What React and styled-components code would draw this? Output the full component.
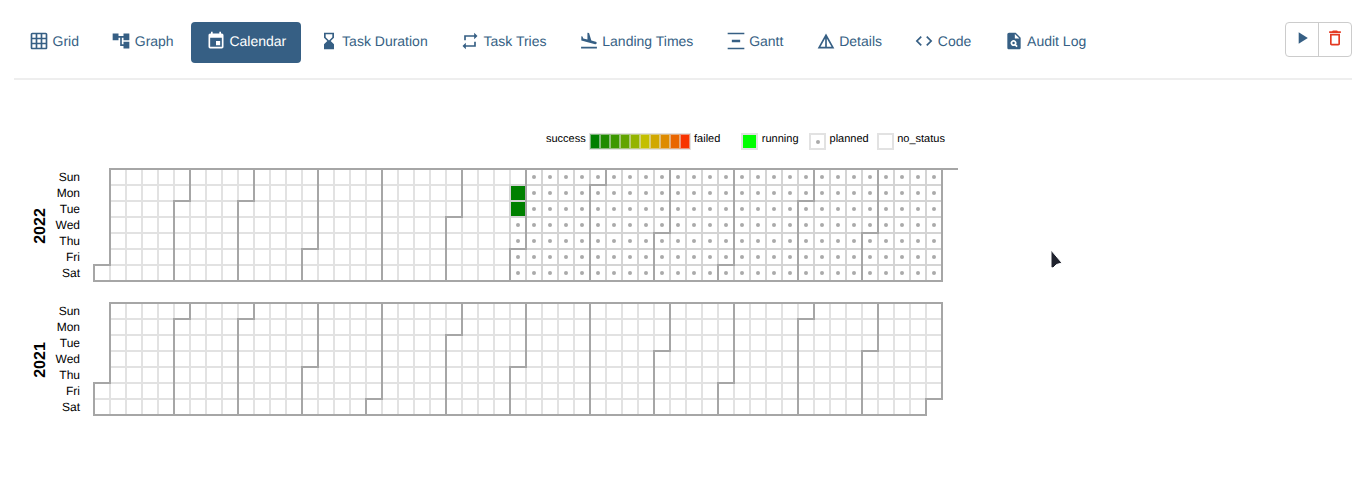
import React from 'react'
import styled, {createGlobalStyle} from 'styled-components'
import {
  MdGridOn, MdAccountTree, MdEvent, MdHourglassBottom, MdRepeat, MdFlightLand,
  MdVerticalDistribute, MdDetails, MdCode, MdPlagiarism, MdPlayArrow, MdDeleteOutline,
} from 'react-icons/md'

const CELL = 16
const LEFT = 94
const DAYS = ['Sun', 'Mon', 'Tue', 'Wed', 'Thu', 'Fri', 'Sat']
const RAMP = ['#008000', '#1f8b00', '#3c9800', '#62a400', '#94b400', '#c4bf00', '#d1a800', '#de8b00', '#e96600', '#f83300']

const tabs = [
  {label: 'Grid', icon: MdGridOn},
  {label: 'Graph', icon: MdAccountTree},
  {label: 'Calendar', icon: MdEvent, active: true},
  {label: 'Task Duration', icon: MdHourglassBottom},
  {label: 'Task Tries', icon: MdRepeat},
  {label: 'Landing Times', icon: MdFlightLand},
  {label: 'Gantt', icon: MdVerticalDistribute},
  {label: 'Details', icon: MdDetails},
  {label: 'Code', icon: MdCode},
  {label: 'Audit Log', icon: MdPlagiarism},
]

const GlobalStyle = createGlobalStyle`
  html, body {
    margin: 0;
    background: #fff;
    font-family: "Liberation Sans", Arial, sans-serif;
    text-rendering: geometricPrecision;
  }
`

const Page = styled.div`
  position: relative;
  width: 1359px;
  height: 478px;
  overflow: hidden;
`

const Toolbar = styled.div`
  display: flex;
  justify-content: space-between;
  align-items: flex-start;
  margin: 0 7px 0 14px;
  padding: 22px 0 15px;
  border-bottom: 2px solid #eee;
`

const Tabs = styled.nav`
  display: flex;
  gap: 2.3px;
`

const Tab = styled.a`
  display: flex;
  align-items: center;
  gap: 3.5px;
  height: 41px;
  padding: 0 15px 3px;
  box-sizing: border-box;
  border-radius: 4px;
  font-size: 14px;
  color: ${p => (p.$active ? '#fff' : '#365f84')};
  background: ${p => (p.$active ? '#365f84' : 'transparent')};
`

const ButtonGroup = styled.div`
  display: flex;
  box-sizing: border-box;
  height: 35px;
  border: 1px solid #ccc;
  border-radius: 4px;
`

const GroupButton = styled.button`
  display: flex;
  align-items: center;
  justify-content: center;
  width: ${p => (p.$last ? '33px' : '32px')};
  padding: 0 0 3px;
  border: 0;
  border-left: ${p => (p.$last ? '1px solid #ccc' : '0')};
  background: transparent;
  color: ${p => (p.$danger ? '#e43921' : '#365f84')};
`

const Legend = styled.div`
  display: flex;
  align-items: flex-start;
  margin: 52px 0 18px 546px;
  height: 18px;
  font-size: 11px;
  line-height: 13px;
  color: #000;
`

const LegendLabel = styled.span`
  margin: 1px ${p => p.$after || 0}px 0 0;
`

const Ramp = styled.div`
  display: flex;
  margin: 1px 3px 0 3.3px;
  border: 1px solid #e2e2e2;
`

const Swatch = styled.div`
  width: 10px;
  height: 15px;
  box-sizing: border-box;
  border: 1px solid rgba(226, 226, 226, 0.55);
  background: ${p => p.$color};
`

const LegendBox = styled.div`
  display: flex;
  align-items: center;
  justify-content: center;
  box-sizing: border-box;
  width: 17px;
  height: 17px;
  margin: 1px 3.5px 0 0;
  border: 2px solid #e2e2e2;
  background: ${p => p.$color || '#fff'};
`

const LegendDot = styled.div`
  width: 4px;
  height: 4px;
  border-radius: 50%;
  background: #aaa;
`

const YearChart = styled.svg`
  display: block;
  width: 960px;
  height: 134px;
  font-family: "Liberation Sans", Arial, sans-serif;
`

const DayLabel = styled.text`
  font-size: 12px;
  text-anchor: end;
  fill: #000;
`

const YearLabel = styled.text`
  font-size: 16px;
  font-weight: bold;
  text-anchor: middle;
  fill: #000;
`

const DayCell = styled.rect`
  fill: ${p => (p.$status === 'success' ? '#008000' : '#fff')};
  stroke: ${p => (p.$status ? '#d4d4d4' : '#e2e2e2')};
  stroke-width: 2;
`

const PlannedDot = styled.circle`
  fill: #aaa;
`

const MonthLine = styled.path`
  fill: none;
  stroke: #a6a6a6;
  stroke-width: 2;
`

const Pointer = styled.svg`
  position: absolute;
  left: 1048px;
  top: 248px;
`

function dayInfo(year) {
  const out = []
  const jan1 = new Date(Date.UTC(year, 0, 1)).getUTCDay()
  for (let d = new Date(Date.UTC(year, 0, 1)), i = 0; d.getUTCFullYear() === year; d = new Date(d.getTime() + 864e5), i++) {
    out.push({date: d, dow: d.getUTCDay(), week: Math.floor((i + jan1) / 7)})
  }
  return out
}

function monthPath(days, month) {
  const inMonth = days.filter(d => d.date.getUTCMonth() === month)
  const a = inMonth[0]
  const b = inMonth[inMonth.length - 1]
  return `M${(a.week + 1) * CELL},${a.dow * CELL}H${a.week * CELL}V${7 * CELL}H${b.week * CELL}V${(b.dow + 1) * CELL}H${(b.week + 1) * CELL}V0H${(a.week + 1) * CELL}Z`
}

function statusOf(date) {
  const t = date.getTime()
  if (t === Date.UTC(2022, 5, 27) || t === Date.UTC(2022, 5, 28)) return 'success'
  if (t >= Date.UTC(2022, 5, 29)) return 'planned'
  return null
}

function Year({year, overhang}) {
  const days = dayInfo(year)
  const months = Array.from({length: 12}, (_, m) => m)
  return (
    <YearChart viewBox="0 0 960 134">
      <YearLabel transform="translate(45 58) rotate(-90)">{year}</YearLabel>
      {DAYS.map((d, i) => (
        <DayLabel key={d} x="80" y={i * CELL + 13}>{d}</DayLabel>
      ))}
      <g transform={`translate(${LEFT} 1)`}>
        {days.map((d, i) => {
          const status = statusOf(d.date)
          return (
            <DayCell key={i} $status={status} x={d.week * CELL} y={d.dow * CELL} width={CELL} height={CELL} />
          )
        })}
        {days.filter(d => statusOf(d.date) === 'planned').map((d, i) => (
          <PlannedDot key={i} cx={d.week * CELL + 8} cy={d.dow * CELL + 8} r="2" />
        ))}
        {months.map(m => <MonthLine key={m} d={monthPath(days, m)} />)}
        {overhang && <MonthLine d={`M${53 * CELL},0H${54 * CELL}`} />}
      </g>
    </YearChart>
  )
}

export default function App() {
  return (
    <Page>
      <GlobalStyle />
      <Toolbar>
        <Tabs>
          {tabs.map(({label, icon: Icon, active}) => (
            <Tab key={label} $active={active}>
              <Icon size={20} />
              {label}
            </Tab>
          ))}
        </Tabs>
        <ButtonGroup>
          <GroupButton><MdPlayArrow size={20} /></GroupButton>
          <GroupButton $last $danger><MdDeleteOutline size={20} /></GroupButton>
        </ButtonGroup>
      </Toolbar>
      <Legend>
        <LegendLabel>success</LegendLabel>
        <Ramp>
          {RAMP.map(c => <Swatch key={c} $color={c} />)}
        </Ramp>
        <LegendLabel $after={21}>failed</LegendLabel>
        <LegendBox $color="#00ff00" />
        <LegendLabel $after={10.5}>running</LegendLabel>
        <LegendBox><LegendDot /></LegendBox>
        <LegendLabel $after={8}>planned</LegendLabel>
        <LegendBox />
        <LegendLabel>no_status</LegendLabel>
      </Legend>
      <Year year={2022} overhang />
      <Year year={2021} />
      <Pointer width="18" height="24" viewBox="0 0 18 24">
        <path d="M3 2 L3 19.5 L5 20 L8.5 16.5 L14 15 Z" fill="#20232e" stroke="#fff" strokeWidth="1" />
      </Pointer>
    </Page>
  )
}
